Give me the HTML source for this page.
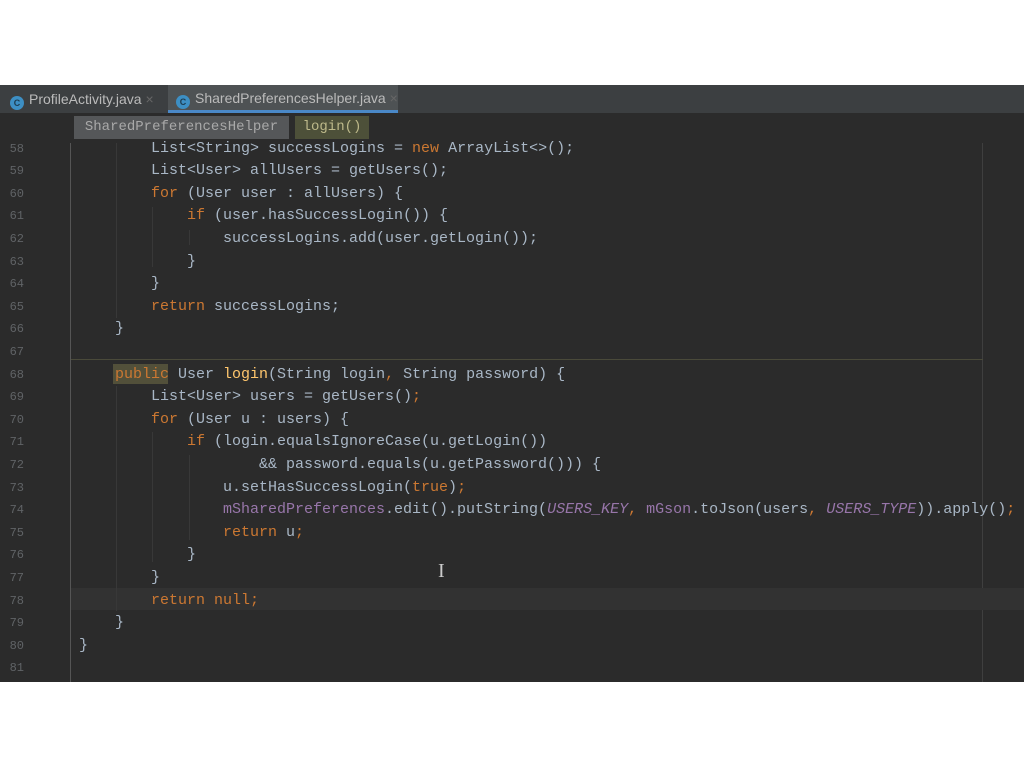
<!DOCTYPE html>
<html><head><meta charset="utf-8"><style>
body{margin:0;width:1024px;height:767px;background:#fff;overflow:hidden;position:relative;font-family:"Liberation Mono",monospace}
#ed{position:absolute;left:0;top:85px;width:1024px;height:597px;background:#2b2b2b}
#tabs{position:absolute;left:0;top:85px;width:1024px;height:28px;background:#3c3f41;font-family:"Liberation Sans",sans-serif;font-size:14px;color:#bbb}
.tab{position:absolute;top:0;height:28px;line-height:28px}
.ic{display:inline-block;width:14px;height:14px;border-radius:50%;background:#3d8fc4;vertical-align:-2px;margin-right:5px;color:#1d3c50;font-size:9px;line-height:14px;text-align:center;font-weight:bold}
.bc{position:absolute;top:116px;height:23px;line-height:23px;font-size:14px}
.code{position:absolute;left:79px;font-size:15px;line-height:22.6px;color:#a9b7c6;white-space:pre}
.ln{position:absolute;left:0;width:24px;text-align:right;font-size:12px;color:#606366;line-height:22.6px}
.g{position:absolute;width:1px;background:#383838}
.k{color:#cc7832}.f{color:#9876aa}.m{color:#ffc66d}.i{color:#9876aa;font-style:italic}
</style></head><body>
<div id="ed"></div>
<div style="position:absolute;left:0;top:113px;width:1024px;height:30px;background:#2b2b2b"></div>
<div id="tabs">
<div class="tab" style="left:10px"><span class="ic">C</span>ProfileActivity.java <span style="color:#666">×</span></div>
<div class="tab" style="left:168px;width:222px;background:#4e5254;border-bottom:3px solid #4a88c7;height:25px;line-height:26px;padding-left:8px"><span class="ic">C</span>SharedPreferencesHelper.java <span style="color:#666">×</span></div>
</div>
<div class="bc" style="left:74px;width:215px;background:#555759;color:#a9a9a9;text-align:center">SharedPreferencesHelper</div>
<div class="bc" style="left:295px;width:74px;background:#4d5039;color:#bdb98a;text-align:center">login()</div>
<div style="position:absolute;left:70px;top:143px;width:1px;height:539px;background:#555"></div>
<div style="position:absolute;left:982px;top:143px;width:1px;height:539px;background:#3f3f3f"></div>
<div style="position:absolute;left:71px;top:359px;width:912px;height:1px;background:#4a4a3a"></div>
<div style="position:absolute;left:71px;top:588px;width:953px;height:22px;background:#323232"></div>
<div style="position:absolute;left:113px;top:364px;width:55px;height:20px;background:#52503a"></div>
<div class="g" style="left:116px;top:143px;height:175px"></div>
<div class="g" style="left:152px;top:207px;height:60px"></div>
<div class="g" style="left:189px;top:230px;height:15px"></div>
<div class="g" style="left:116px;top:386px;height:225px"></div>
<div class="g" style="left:152px;top:432px;height:130px"></div>
<div class="g" style="left:189px;top:455px;height:85px"></div>
<div id="lines"></div>
<script>
var L=[
[58,1,'List&lt;String&gt; successLogins = <span class="k">new</span> ArrayList&lt;&gt;();'],
[59,1,'List&lt;User&gt; allUsers = getUsers();'],
[60,1,'<span class="k">for</span> (User user : allUsers) {'],
[61,2,'<span class="k">if</span> (user.hasSuccessLogin()) {'],
[62,3,'successLogins.add(user.getLogin());'],
[63,2,'}'],
[64,1,'}'],
[65,1,'<span class="k">return</span> successLogins;'],
[66,0,'}'],
[67,0,''],
[68,0,'<span class="k">public</span> User <span class="m">login</span>(String login<span class="k">,</span> String password) {'],
[69,1,'List&lt;User&gt; users = getUsers()<span class="k">;</span>'],
[70,1,'<span class="k">for</span> (User u : users) {'],
[71,2,'<span class="k">if</span> (login.equalsIgnoreCase(u.getLogin())'],
[72,4,'&amp;&amp; password.equals(u.getPassword())) {'],
[73,3,'u.setHasSuccessLogin(<span class="k">true</span>)<span class="k">;</span>'],
[74,3,'<span class="f">mSharedPreferences</span>.edit().putString(<span class="i">USERS_KEY</span><span class="k">,</span> <span class="f">mGson</span>.toJson(users<span class="k">,</span> <span class="i">USERS_TYPE</span>)).apply()<span class="k">;</span>'],
[75,3,'<span class="k">return</span> u<span class="k">;</span>'],
[76,2,'}'],
[77,1,'}'],
[78,1,'<span class="k">return null;</span>'],
[79,0,'}'],
[80,-1,'}'],
[81,-1,'']];
var h='';
L.forEach(function(r,j){var y=137.5+j*22.6;
h+='<div class="ln" style="top:'+y+'px">'+r[0]+'</div>';
h+='<div class="code" style="top:'+y+'px;left:'+(79+(r[1]+1)*36)+'px">'+r[2]+'</div>';});
document.getElementById('lines').innerHTML=h;
</script>
<div style="position:absolute;left:438px;top:560px;color:#ccc;font-size:20px;font-family:'Liberation Serif',serif">I</div>
</body></html>
